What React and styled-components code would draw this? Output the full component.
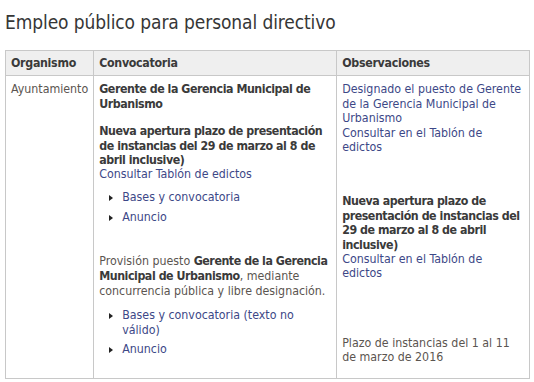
import React from "react";
import styled, { createGlobalStyle } from "styled-components";

const GlobalStyle = createGlobalStyle`
  body {
    margin: 0;
    background: #fff;
    font-family: "DejaVu Sans Condensed", Tahoma, "DejaVu Sans", sans-serif;
    color: #5b5550;
  }
`;

const Page = styled.div`
  padding: 9px 4px 0 5px;
`;

const Title = styled.h2`
  margin: 0 0 15px;
  font-size: 19px;
  letter-spacing: -0.1px;
  line-height: 26px;
  font-weight: normal;
  color: #363636;
`;

const Table = styled.table`
  width: 100%;
  border-collapse: collapse;
  font-size: 12.3px;
  line-height: 14.4px;
`;

const Th = styled.th`
  text-align: left;
  background: #efefef;
  border: 1px solid #c8c8c8;
  padding: 5px 5px 5px;
  height: 14px;
  font-weight: bold;
  letter-spacing: -0.3px;
  color: #3a3a3a;
  width: ${(p) => p.$w || "auto"};
`;

const Td = styled.td`
  vertical-align: top;
  border: 1px solid #c8c8c8;
  padding: 6px 5px 6px;
`;

const Strong = styled.strong`
  color: #3a3a3a;
  letter-spacing: -0.45px;
`;

const Link = styled.a`
  color: #3d4887;
  text-decoration: none;
`;

const Block = styled.div`
  margin-top: ${(p) => p.$top || 0}px;
  line-height: ${(p) => p.$lh || "inherit"};
`;

const Bullets = styled.ul`
  list-style: none;
  margin: ${(p) => p.$top || 10}px 0 0;
  padding: 0 0 0 23px;
`;

const Item = styled.li`
  position: relative;
  margin-bottom: 5.5px;

  &::before {
    content: "";
    position: absolute;
    left: -13px;
    top: 5px;
    border-style: solid;
    border-width: 3.5px 0 3.5px 4px;
    border-color: transparent transparent transparent #222;
  }
`;

const App = () => {
  return (
    <Page>
      <GlobalStyle />
      <Title>Empleo público para personal directivo</Title>
      <Table>
        <thead>
          <tr>
            <Th $w="77px">Organismo</Th>
            <Th $w="232px">Convocatoria</Th>
            <Th>Observaciones</Th>
          </tr>
        </thead>
        <tbody>
          <tr>
            <Td>Ayuntamiento</Td>
            <Td>
              <Strong>Gerente de la Gerencia Municipal de Urbanismo</Strong>
              <Block $top={13}>
                <Strong>
                  Nueva apertura plazo de presentación de instancias del 29 de
                  marzo al 8 de abril inclusive)
                </Strong>
                <br />
                <Link href="#">Consultar Tablón de edictos</Link>
              </Block>
              <Bullets $top={8}>
                <Item>
                  <Link href="#">Bases y convocatoria</Link>
                </Item>
                <Item>
                  <Link href="#">Anuncio</Link>
                </Item>
              </Bullets>
              <Block $top={30} $lh="15px">
                Provisión puesto{" "}
                <Strong>Gerente de la Gerencia Municipal de Urbanismo</Strong>,
                mediante concurrencia pública y libre designación.
              </Block>
              <Bullets $top={9}>
                <Item>
                  <Link href="#">Bases y convocatoria (texto no válido)</Link>
                </Item>
                <Item>
                  <Link href="#">Anuncio</Link>
                </Item>
              </Bullets>
              <Block $top={15} />
            </Td>
            <Td>
              <Link href="#">
                Designado el puesto de Gerente de la Gerencia Municipal de
                Urbanismo
              </Link>
              <br />
              <Link href="#">Consultar en el Tablón de edictos</Link>
              <Block $top={40}>
                <Strong>
                  Nueva apertura plazo de presentación de instancias del 29 de
                  marzo al 8 de abril inclusive)
                </Strong>
                <br />
                <Link href="#">Consultar en el Tablón de edictos</Link>
              </Block>
              <Block $top={55}>
                Plazo de instancias del 1 al 11 de marzo de 2016
              </Block>
            </Td>
          </tr>
        </tbody>
      </Table>
    </Page>
  );
};

export default App;
